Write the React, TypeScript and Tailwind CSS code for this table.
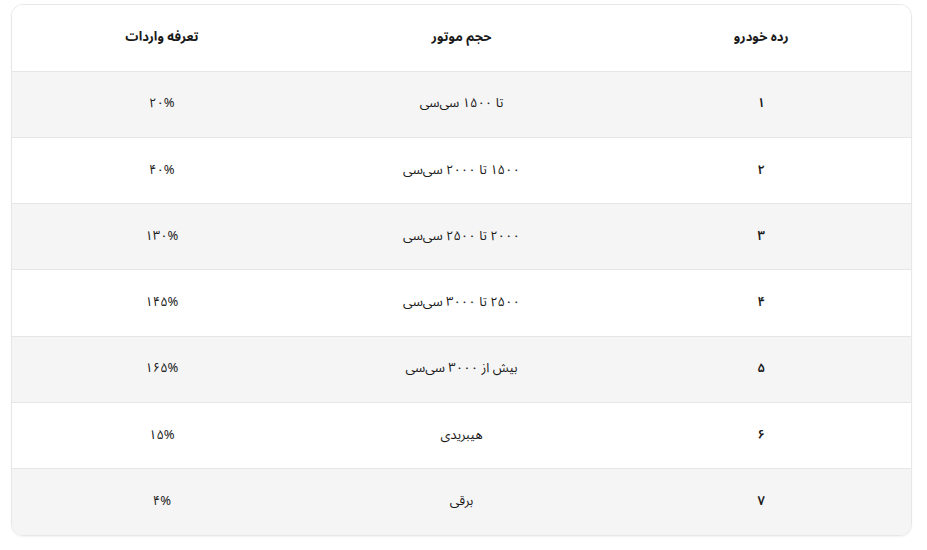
import React from 'react';

const rows = [
  { grade: '۱', engine: 'تا ۱۵۰۰ سی‌سی', tariff: '۲۰%' },
  { grade: '۲', engine: '۱۵۰۰ تا ۲۰۰۰ سی‌سی', tariff: '۴۰%' },
  { grade: '۳', engine: '۲۰۰۰ تا ۲۵۰۰ سی‌سی', tariff: '۱۳۰%' },
  { grade: '۴', engine: '۲۵۰۰ تا ۳۰۰۰ سی‌سی', tariff: '۱۴۵%' },
  { grade: '۵', engine: 'بیش از ۳۰۰۰ سی‌سی', tariff: '۱۶۵%' },
  { grade: '۶', engine: 'هیبریدی', tariff: '۱۵%' },
  { grade: '۷', engine: 'برقی', tariff: '۴%' },
];

const App = () => {
  return (
    <div className="w-[927px] h-[550px] bg-white pt-[4px] pl-[11px]" style={{ fontFamily: '"Noto Sans Arabic", "DejaVu Sans", sans-serif' }}>
      <div dir="rtl" className="w-[901px] rounded-xl border border-[#e7e7e7] overflow-hidden shadow-[0_1px_2px_rgba(0,0,0,0.06)]">
        <table className="w-full table-fixed border-collapse text-[13px] text-[#1a1a1a]">
          <thead>
            <tr className="h-[66px] bg-white border-b border-[#e6e6e6]">
              <th className="font-bold">رده خودرو</th>
              <th className="font-bold">حجم موتور</th>
              <th className="font-bold">تعرفه واردات</th>
            </tr>
          </thead>
          <tbody>
            {rows.map((r, i) => (
              <tr
                key={i}
                className={`h-[66.25px] ${i % 2 === 0 ? 'bg-[#f5f5f5]' : 'bg-white'} ${i < rows.length - 1 ? 'border-b border-[#e6e6e6]' : ''}`}
              >
                <td className="text-center font-semibold">{r.grade}</td>
                <td className="text-center">{r.engine}</td>
                <td className="text-center">{r.tariff}</td>
              </tr>
            ))}
          </tbody>
        </table>
      </div>
    </div>
  );
};

export default App;
